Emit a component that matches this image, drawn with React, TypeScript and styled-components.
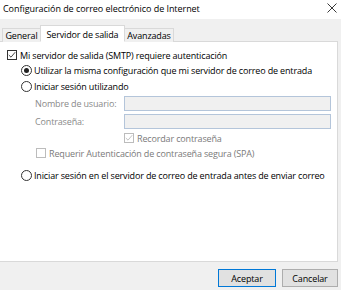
import styled, { createGlobalStyle } from 'styled-components'

const Global = createGlobalStyle`
  html, body {
    margin: 0;
    padding: 0;
    background: #f0f0f0;
  }
  body {
    font-family: "Open Sans", "Noto Sans", sans-serif;
    font-size: 9px;
    letter-spacing: -0.15px;
    color: #000;
  }
`

const Window = styled.div`
  width: 341px;
  height: 290px;
  background: #f0f0f0;
  display: flex;
  flex-direction: column;
  overflow: hidden;
`

const TitleBar = styled.div`
  height: 19px;
  background: #fff;
  display: flex;
  align-items: center;
  justify-content: space-between;
  padding: 0 4px 3px 3px;
  box-sizing: border-box;
  font-size: 9px;
  letter-spacing: -0.05px;
`

const CloseIcon = () => (
  <svg width="10" height="10" viewBox="0 0 10 10">
    <path d="M0.5 0.5 L9.5 9.5 M9.5 0.5 L0.5 9.5" stroke="#222" strokeWidth="0.9" fill="none" />
  </svg>
)

const TabStrip = styled.div`
  display: flex;
  align-items: flex-end;
  height: 23px;
  padding-left: 2px;
  position: relative;
  z-index: 1;
`

const Tab = styled.div<{ $active?: boolean; $w: number }>`
  width: ${p => p.$w}px;
  height: ${p => (p.$active ? 17 : 14)}px;
  margin: 0 ${p => (p.$active ? -1 : 0)}px;
  background: ${p => (p.$active ? '#fff' : '#f0f0f0')};
  border: 1px solid #d9d9d9;
  border-bottom: ${p => (p.$active ? '1px solid #fff' : 'none')};
  box-sizing: border-box;
  display: flex;
  justify-content: center;
  align-items: ${p => (p.$active ? 'flex-start' : 'center')};
  padding-top: ${p => (p.$active ? 2 : 0)}px;
  white-space: nowrap;
  position: relative;
  z-index: ${p => (p.$active ? 2 : 1)};
`

const Panel = styled.div`
  margin: -1px 3px 0 0;
  height: 221px;
  background: #fff;
  border: 1px solid #d9d9d9;
  border-left: none;
  box-sizing: border-box;
  padding-top: 5px;
  display: flex;
  flex-direction: column;
`

const Row = styled.div<{ $indent: number; $gap: number; $h?: number; $muted?: boolean }>`
  display: flex;
  align-items: center;
  height: ${p => p.$h ?? 14}px;
  margin-top: ${p => p.$gap}px;
  padding-left: ${p => p.$indent}px;
  color: ${p => (p.$muted ? '#7a7a7a' : '#000')};
  white-space: nowrap;
`

const Box = styled.span<{ $disabled?: boolean }>`
  width: 10px;
  height: 10px;
  border: 1px solid ${p => (p.$disabled ? '#bcbcbc' : '#333')};
  background: #fff;
  box-sizing: border-box;
  margin-right: 3px;
  display: inline-flex;
  align-items: center;
  justify-content: center;
  flex: none;
`

const Check = ({ color }: { color: string }) => (
  <svg width="8" height="8" viewBox="0 0 8 8">
    <path d="M0.8 4 L3 6.2 L7.2 1.2" stroke={color} strokeWidth="0.9" fill="none" />
  </svg>
)

const Radio = styled.span<{ $on?: boolean }>`
  width: 11px;
  height: 11px;
  border-radius: 50%;
  border: 1px solid #333;
  box-sizing: border-box;
  margin-right: 2px;
  display: inline-flex;
  align-items: center;
  justify-content: center;
  flex: none;
  &::after {
    content: '';
    display: ${p => (p.$on ? 'block' : 'none')};
    width: 5px;
    height: 5px;
    border-radius: 50%;
    background: #222;
  }
`

const Field = styled.div<{ $gap: number }>`
  display: grid;
  grid-template-columns: 89px 207px;
  align-items: center;
  padding-left: 35px;
  margin-top: ${p => p.$gap}px;
  color: #8a8a8a;
`

const Input = styled.div`
  height: 15px;
  border: 1px solid #b4c5da;
  background: #f0f0f0;
  box-sizing: border-box;
`

const Footer = styled.div`
  display: flex;
  justify-content: flex-end;
  gap: 6px;
  padding: 7px 3px 0 0;
`

const Button = styled.button<{ $primary?: boolean }>`
  width: ${p => (p.$primary ? 58 : 56)}px;
  height: 18px;
  padding: 0;
  font-family: inherit;
  font-size: 9px;
  letter-spacing: -0.15px;
  color: #000;
  background: #e1e1e1;
  border: 1px solid ${p => (p.$primary ? '#0078d7' : '#adadad')};
  box-sizing: border-box;
`

export default function App() {
  return (
    <Window>
      <Global />
      <TitleBar>
        <span>Configuración de correo electrónico de Internet</span>
        <CloseIcon />
      </TitleBar>
      <TabStrip>
        <Tab $w={39}>General</Tab>
        <Tab $w={85} $active>Servidor de salida</Tab>
        <Tab $w={50}>Avanzadas</Tab>
      </TabStrip>
      <Panel>
        <Row $indent={7} $gap={1}>
          <Box><Check color="#333" /></Box>
          Mi servidor de salida (SMTP) requiere autenticación
        </Row>
        <Row $indent={21} $gap={1}>
          <Radio $on />
          Utilizar la misma configuración que mi servidor de correo de entrada
        </Row>
        <Row $indent={21} $gap={2}>
          <Radio />
          Iniciar sesión utilizando
        </Row>
        <Field $gap={3}>
          <span>Nombre de usuario:</span>
          <Input />
        </Field>
        <Field $gap={3}>
          <span>Contraseña:</span>
          <Input />
        </Field>
        <Row $indent={124} $gap={3} $h={12} $muted>
          <Box $disabled><Check color="#bcbcbc" /></Box>
          Recordar contraseña
        </Row>
        <Row $indent={36} $gap={3} $h={12} $muted>
          <Box $disabled />
          Requerir Autenticación de contraseña segura (SPA)
        </Row>
        <Row $indent={21} $gap={9}>
          <Radio />
          Iniciar sesión en el servidor de correo de entrada antes de enviar correo
        </Row>
      </Panel>
      <Footer>
        <Button $primary>Aceptar</Button>
        <Button>Cancelar</Button>
      </Footer>
    </Window>
  )
}
